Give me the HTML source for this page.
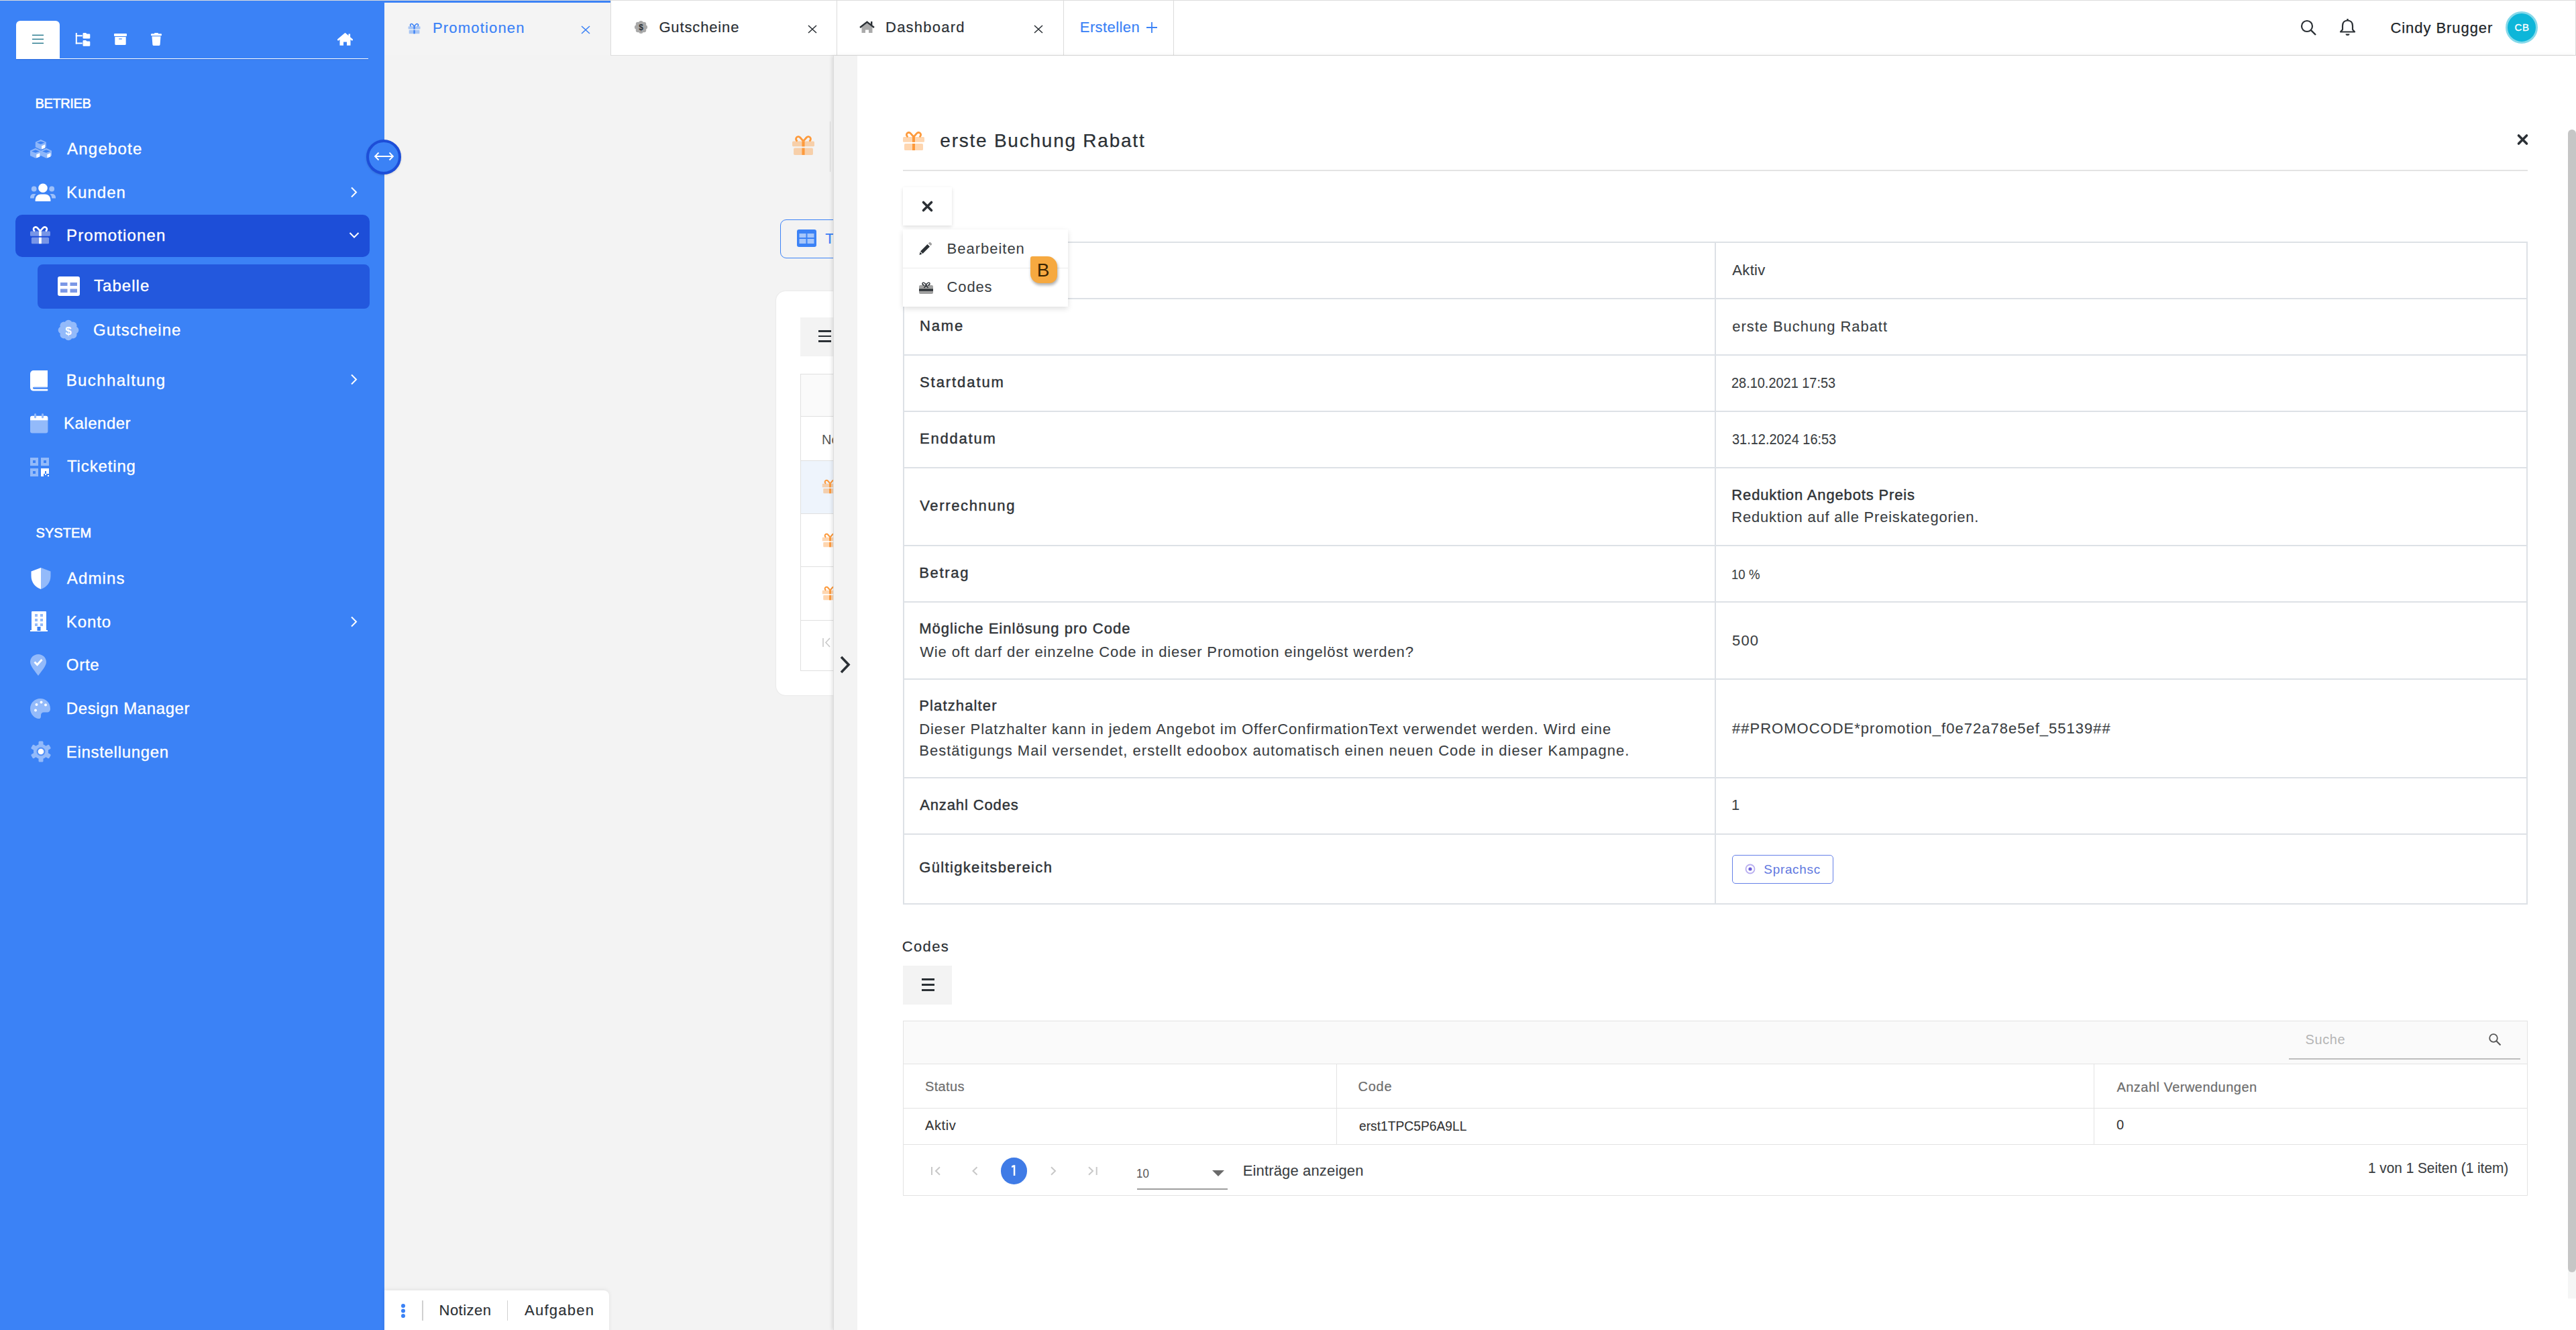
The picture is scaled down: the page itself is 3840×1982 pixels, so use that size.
<!DOCTYPE html><html><head><meta charset="utf-8"><style>
html,body{margin:0;padding:0}
body{width:3840px;height:1982px;position:relative;overflow:hidden;background:#f3f3f3;font-family:"Liberation Sans",sans-serif}
.t{position:absolute;white-space:nowrap;line-height:1}
svg{display:block}
</style></head><body>
<div style="position:absolute;left:573px;top:0px;width:337px;height:82px;background:#f4f4f4;"></div>
<div style="position:absolute;left:573px;top:1px;width:337px;height:3px;background:#3b82f6;"></div>
<div style="position:absolute;left:910px;top:0px;width:2930px;height:82px;background:#fff;border-bottom:1px solid #dedede;border-right:1px solid #dcdcdc;box-sizing:border-box;height:83px;"></div>
<div style="position:absolute;left:0px;top:0px;width:3840px;height:1px;background:#dcdcdc;"></div>
<div style="position:absolute;left:910px;top:0px;width:1px;height:83px;background:#dcdcdc;"></div>
<div style="position:absolute;left:1247px;top:0px;width:1px;height:83px;background:#dcdcdc;"></div>
<div style="position:absolute;left:1585px;top:0px;width:1px;height:83px;background:#dcdcdc;"></div>
<div style="position:absolute;left:1749px;top:0px;width:1px;height:83px;background:#dcdcdc;"></div>
<svg style="position:absolute;left:608.4px;top:34px;" width="19.1" height="16.9" viewBox="0 0 34 30"><g fill="#3b82f6"><g opacity="0.4"><rect x="1" y="9.1" width="32" height="7.7" rx="1.6"/><rect x="3" y="19" width="28" height="10" rx="1.6"/></g><rect x="15" y="9.1" width="4" height="7.7"/><rect x="15" y="19" width="4" height="10"/></g><path d="M17 9L12.5 3.8C11 2 8 2 6.8 4.2C5.8 6 6.5 8 8.5 9M17 9L21.5 3.8C23 2 26 2 27.2 4.2C28.2 6 27.5 8 25.5 9" fill="none" stroke="#3b82f6" stroke-width="2.8"/></svg>
<div class="t" style="left:644.90px;top:31.27px;font-size:22px;color:#3b82f6;letter-spacing:1.190px;-webkit-text-stroke:0.2px #3b82f6;">Promotionen</div>
<svg style="position:absolute;left:866px;top:38px;" width="14" height="13" viewBox="0 0 14 13"><path d="M1 1L13 12M13 1L1 12" stroke="#3b82f6" stroke-width="1.6"/></svg>
<svg style="position:absolute;left:945px;top:30px;" width="21" height="21" viewBox="0 0 21 21"><g fill="#a9a9a9"><circle cx="10.5" cy="10.5" r="7.5"/><circle cx="16.80" cy="10.50" r="3.3"/><circle cx="14.95" cy="14.95" r="3.3"/><circle cx="10.50" cy="16.80" r="3.3"/><circle cx="6.05" cy="14.95" r="3.3"/><circle cx="4.20" cy="10.50" r="3.3"/><circle cx="6.05" cy="6.05" r="3.3"/><circle cx="10.50" cy="4.20" r="3.3"/><circle cx="14.95" cy="6.05" r="3.3"/></g><text x="10.5" y="15" font-family="Liberation Sans" font-weight="700" font-size="12" text-anchor="middle" fill="#2b3035">$</text></svg>
<div class="t" style="left:982.40px;top:29.57px;font-size:22px;color:#2b3035;letter-spacing:0.861px;-webkit-text-stroke:0.2px #2b3035;">Gutscheine</div>
<svg style="position:absolute;left:1204px;top:37px;" width="14" height="13" viewBox="0 0 14 13"><path d="M1 1L13 12M13 1L1 12" stroke="#2b3035" stroke-width="1.6"/></svg>
<svg style="position:absolute;left:1281px;top:31px;" width="24" height="19" viewBox="0 0 24 19"><path d="M3.5 9.5V18H9V13.5H14V18H19.5V9.5L11.5 3Z" fill="#aaaaaa"/><path d="M1 10L11.5 1.8L22 10" fill="none" stroke="#2b3035" stroke-width="2.4"/><rect x="17" y="1" width="2.4" height="5" fill="#2b3035"/></svg>
<div class="t" style="left:1320.00px;top:29.57px;font-size:22px;color:#2b3035;letter-spacing:1.239px;-webkit-text-stroke:0.2px #2b3035;">Dashboard</div>
<svg style="position:absolute;left:1541px;top:37px;" width="14" height="13" viewBox="0 0 14 13"><path d="M1 1L13 12M13 1L1 12" stroke="#2b3035" stroke-width="1.6"/></svg>
<div class="t" style="left:1609.80px;top:29.77px;font-size:22px;color:#3b82f6;letter-spacing:0.405px;-webkit-text-stroke:0.2px #3b82f6;">Erstellen</div>
<svg style="position:absolute;left:1709px;top:33px;" width="16" height="16" viewBox="0 0 16 16"><path d="M8 0V16M0 8H16" stroke="#3b82f6" stroke-width="1.8"/></svg>
<svg style="position:absolute;left:3429px;top:29px;" width="25" height="25" viewBox="0 0 25 25"><circle cx="10" cy="10" r="8" fill="none" stroke="#2b3035" stroke-width="2.2"/><path d="M15.8 15.8L23 23" stroke="#2b3035" stroke-width="2.4"/></svg>
<svg style="position:absolute;left:3487px;top:27px;" width="25" height="27" viewBox="0 0 25 27"><path d="M12.5 3.5c-5 0-7.5 3.5-7.5 8v5.5l-3 3.5h21l-3-3.5v-5.5c0-4.5-2.5-8-7.5-8z" fill="none" stroke="#2b3035" stroke-width="2.2" stroke-linejoin="round"/><rect x="11.3" y="1" width="2.4" height="3" fill="#2b3035"/><path d="M9.5 23.5a3 2.5 0 0 0 6 0z" fill="#2b3035"/></svg>
<div class="t" style="left:3563.40px;top:31.07px;font-size:22px;color:#212529;letter-spacing:0.942px;-webkit-text-stroke:0.25px #212529;">Cindy Brugger</div>
<div style="position:absolute;left:3735px;top:17px;width:42px;height:42px;border-radius:50%;background:#0db6d9;border:3px solid #86d9ea"></div>
<div class="t" style="left:3748.50px;top:32.90px;font-size:15px;color:#fff;letter-spacing:0.667px;-webkit-text-stroke:0.3px #fff;">CB</div>
<svg style="position:absolute;left:1180px;top:201px;" width="35" height="31" viewBox="0 0 34 30"><g fill="#fd9a3c"><g opacity="0.4"><rect x="1" y="9.1" width="32" height="7.7" rx="1.6"/><rect x="3" y="19" width="28" height="10" rx="1.6"/></g><rect x="15" y="9.1" width="4" height="7.7"/><rect x="15" y="19" width="4" height="10"/></g><path d="M17 9L12.5 3.8C11 2 8 2 6.8 4.2C5.8 6 6.5 8 8.5 9M17 9L21.5 3.8C23 2 26 2 27.2 4.2C28.2 6 27.5 8 25.5 9" fill="none" stroke="#fd9a3c" stroke-width="2.8"/></svg>
<div style="position:absolute;left:1237px;top:181px;width:1px;height:75px;background:#d9d9d9;"></div>
<div style="position:absolute;left:1163px;top:327px;width:200px;height:58px;border:1.5px solid #3b82f6;border-radius:9px;box-sizing:border-box"></div>
<svg style="position:absolute;left:1188px;top:342px;" width="29" height="26" viewBox="0 0 29 26"><rect width="29" height="26" rx="3" fill="#3b82f6"/><g fill="#fff" opacity=".55"><rect x="3.5" y="6" width="10" height="6"/><rect x="15.5" y="6" width="10" height="6"/><rect x="3.5" y="14" width="10" height="7"/><rect x="15.5" y="14" width="10" height="7"/></g></svg>
<div class="t" style="left:1230.20px;top:345.37px;font-size:22px;color:#3b82f6;-webkit-text-stroke:0.2px #3b82f6;">Ta</div>
<div style="position:absolute;left:1157px;top:434px;width:500px;height:602px;background:#fff;border-radius:14px;box-shadow:0 0 2px rgba(0,0,0,.12)"></div>
<div style="position:absolute;left:1193px;top:473px;width:100px;height:58px;background:#f3f3f3;"></div>
<div style="position:absolute;left:1220px;top:492px;width:19px;height:2.6px;background:#2b3035;"></div>
<div style="position:absolute;left:1220px;top:499.5px;width:19px;height:2.6px;background:#2b3035;"></div>
<div style="position:absolute;left:1220px;top:507px;width:19px;height:2.6px;background:#2b3035;"></div>
<div style="position:absolute;left:1193px;top:557px;width:300px;height:443px;border:1px solid #e0e0e0;box-sizing:border-box;background:#fff"></div>
<div style="position:absolute;left:1194px;top:558px;width:299px;height:63px;background:#fafafa;border-bottom:1px solid #e0e0e0;box-sizing:border-box;"></div>
<div style="position:absolute;left:1194px;top:686px;width:299px;height:1px;background:#e0e0e0;"></div>
<div style="position:absolute;left:1194px;top:687px;width:299px;height:78px;background:#eef4fc;"></div>
<div style="position:absolute;left:1194px;top:765px;width:299px;height:1px;background:#e0e0e0;"></div>
<div style="position:absolute;left:1194px;top:844px;width:299px;height:1px;background:#e0e0e0;"></div>
<div style="position:absolute;left:1194px;top:924px;width:299px;height:1px;background:#e0e0e0;"></div>
<div class="t" style="left:1225.00px;top:645.07px;font-size:20px;color:#555;">No</div>
<svg style="position:absolute;left:1225px;top:714px;" width="25" height="22" viewBox="0 0 34 30"><g fill="#fd9a3c"><g opacity="0.4"><rect x="1" y="9.1" width="32" height="7.7" rx="1.6"/><rect x="3" y="19" width="28" height="10" rx="1.6"/></g><rect x="15" y="9.1" width="4" height="7.7"/><rect x="15" y="19" width="4" height="10"/></g><path d="M17 9L12.5 3.8C11 2 8 2 6.8 4.2C5.8 6 6.5 8 8.5 9M17 9L21.5 3.8C23 2 26 2 27.2 4.2C28.2 6 27.5 8 25.5 9" fill="none" stroke="#fd9a3c" stroke-width="2.8"/></svg>
<svg style="position:absolute;left:1225px;top:794px;" width="25" height="22" viewBox="0 0 34 30"><g fill="#fd9a3c"><g opacity="0.4"><rect x="1" y="9.1" width="32" height="7.7" rx="1.6"/><rect x="3" y="19" width="28" height="10" rx="1.6"/></g><rect x="15" y="9.1" width="4" height="7.7"/><rect x="15" y="19" width="4" height="10"/></g><path d="M17 9L12.5 3.8C11 2 8 2 6.8 4.2C5.8 6 6.5 8 8.5 9M17 9L21.5 3.8C23 2 26 2 27.2 4.2C28.2 6 27.5 8 25.5 9" fill="none" stroke="#fd9a3c" stroke-width="2.8"/></svg>
<svg style="position:absolute;left:1225px;top:873px;" width="25" height="22" viewBox="0 0 34 30"><g fill="#fd9a3c"><g opacity="0.4"><rect x="1" y="9.1" width="32" height="7.7" rx="1.6"/><rect x="3" y="19" width="28" height="10" rx="1.6"/></g><rect x="15" y="9.1" width="4" height="7.7"/><rect x="15" y="19" width="4" height="10"/></g><path d="M17 9L12.5 3.8C11 2 8 2 6.8 4.2C5.8 6 6.5 8 8.5 9M17 9L21.5 3.8C23 2 26 2 27.2 4.2C28.2 6 27.5 8 25.5 9" fill="none" stroke="#fd9a3c" stroke-width="2.8"/></svg>
<svg style="position:absolute;left:1226px;top:950px;" width="20" height="15" viewBox="0 0 20 15"><path d="M1 1V14" stroke="#c9c9c9" stroke-width="1.6"/><path d="M11 1L5 7.5L11 14" fill="none" stroke="#c9c9c9" stroke-width="1.6"/></svg>
<div style="position:absolute;left:0px;top:1px;width:573px;height:1981px;background:#3b82f6;"></div>
<div style="position:absolute;left:24px;top:31px;width:65px;height:57px;background:#fff;border-radius:6px 6px 0 0"></div>
<div style="position:absolute;left:24px;top:86.8px;width:525px;height:1.3px;background:#fff;box-shadow:0 1px 1px rgba(20,60,160,.35);"></div>
<svg style="position:absolute;left:48px;top:51px;" width="17" height="15" viewBox="0 0 17 15"><path d="M0 1.4H17M0 7.4H17M0 13.3H17" stroke="#0e6a80" stroke-width="1.3"/></svg>
<svg style="position:absolute;left:112px;top:48px;" width="23" height="21" viewBox="0 0 23 21"><g fill="#fff"><rect x="0.8" y="1" width="2" height="16.5"/><rect x="0.8" y="4.3" width="10" height="2"/><rect x="0.8" y="15.5" width="10" height="2"/><path d="M11.5 2.2a1.2 1.2 0 0 1 1.2-1.2h3.3l1.6 1.4h3.5a1.2 1.2 0 0 1 1.2 1.2v4.6a1.2 1.2 0 0 1-1.2 1.2h-8.4a1.2 1.2 0 0 1-1.2-1.2z"/><path d="M11.5 13.2a1.2 1.2 0 0 1 1.2-1.2h3.3l1.6 1.4h3.5a1.2 1.2 0 0 1 1.2 1.2v4.9a1.2 1.2 0 0 1-1.2 1.2h-8.4a1.2 1.2 0 0 1-1.2-1.2z"/></g></svg>
<svg style="position:absolute;left:169px;top:49px;" width="21" height="19" viewBox="0 0 21 19"><rect x="1" y="1" width="19" height="4" rx="1" fill="#fff"/><path d="M2.3 6H18.7V16.5a1.5 1.5 0 0 1-1.5 1.5H3.8a1.5 1.5 0 0 1-1.5-1.5z" fill="#fff"/><rect x="8" y="8.2" width="5" height="1.6" rx=".8" fill="#3b82f6" opacity=".8"/></svg>
<svg style="position:absolute;left:224px;top:48px;" width="18" height="21" viewBox="0 0 18 21"><rect x="1" y="2.3" width="16" height="3" rx="1" fill="#fff"/><rect x="6" y="1" width="6" height="2.5" rx="1" fill="#fff"/><path d="M2.5 6.3H15.5L14.6 18.6a1.5 1.5 0 0 1-1.5 1.4H4.9a1.5 1.5 0 0 1-1.5-1.4z" fill="#fff"/></svg>
<svg style="position:absolute;left:503px;top:49px;" width="23" height="20" viewBox="0 0 23 20"><path d="M3.5 9V18.7H9V13.5H14V18.7H19.5V9L11.5 2.2Z" fill="#fff"/><path d="M1.2 10.2L11.5 1.5L21.8 10.2" fill="none" stroke="#fff" stroke-width="2.6" stroke-linecap="round"/><rect x="16.5" y="1.5" width="2.6" height="5" fill="#fff"/></svg>
<div class="t" style="left:52.50px;top:144.37px;font-size:20px;color:#fff;letter-spacing:-0.373px;-webkit-text-stroke:0.6px #fff;">BETRIEB</div>
<svg style="position:absolute;left:44px;top:207px;" width="34" height="30" viewBox="0 0 34 30"><path d="M16.80,1.00 L24.80,4.80 L24.80,12.20 L16.80,16.00 L8.80,12.20 L8.80,4.80Z M10.90,5.60 L16.80,3.50 L22.70,5.60 L16.80,7.90Z" fill="#fff" fill-opacity=".42" fill-rule="evenodd"/><polygon points="18.10,10.40 23.10,8.30 23.10,13.60 18.10,15.60" fill="#fff"/><path d="M9.00,13.80 L17.00,17.60 L17.00,25.00 L9.00,28.80 L1.00,25.00 L1.00,17.60Z M3.10,18.40 L9.00,16.30 L14.90,18.40 L9.00,20.70Z" fill="#fff" fill-opacity=".42" fill-rule="evenodd"/><polygon points="10.30,23.20 15.30,21.10 15.30,26.40 10.30,28.40" fill="#fff"/><path d="M25.00,13.80 L33.00,17.60 L33.00,25.00 L25.00,28.80 L17.00,25.00 L17.00,17.60Z M19.10,18.40 L25.00,16.30 L30.90,18.40 L25.00,20.70Z" fill="#fff" fill-opacity=".42" fill-rule="evenodd"/><polygon points="26.30,23.20 31.30,21.10 31.30,26.40 26.30,28.40" fill="#fff"/></svg>
<div class="t" style="left:100.00px;top:210.18px;font-size:24px;color:#fff;letter-spacing:1.227px;-webkit-text-stroke:0.35px #fff;">Angebote</div>
<svg style="position:absolute;left:44px;top:272px;" width="40" height="30" viewBox="0 0 40 30"><circle cx="20" cy="8.3" r="6.8" fill="#fff"/><path d="M8.6 28v-2.5a8 8 0 0 1 8-8h6.8a8 8 0 0 1 8 8V28z" fill="#fff"/><g fill="#fff" opacity=".5"><circle cx="6.7" cy="9.5" r="3.9"/><circle cx="33.2" cy="9.5" r="3.9"/><path d="M1 22a5 5 0 0 1 5-5h3.5a9 9 0 0 0-2.8 6.5H1z"/><path d="M39 22a5 5 0 0 0-5-5h-3.5a9 9 0 0 1 2.8 6.5H39z"/></g></svg>
<div class="t" style="left:99.00px;top:275.18px;font-size:24px;color:#fff;letter-spacing:1.020px;-webkit-text-stroke:0.35px #fff;">Kunden</div>
<svg style="position:absolute;left:522px;top:278px;" width="12" height="17" viewBox="0 0 12 17"><path d="M2 1.5L9 8.5L2 15.5" fill="none" stroke="#fff" stroke-width="2"/></svg>
<div style="position:absolute;left:23px;top:320px;width:528px;height:63px;background:#1d4ed8;border-radius:10px"></div>
<svg style="position:absolute;left:44.06px;top:335.8px;" width="31.9" height="28.1" viewBox="0 0 34 30"><g fill="#fff"><g opacity="0.4"><rect x="1" y="9.1" width="32" height="7.7" rx="1.6"/><rect x="3" y="19" width="28" height="10" rx="1.6"/></g><rect x="15" y="9.1" width="4" height="7.7"/><rect x="15" y="19" width="4" height="10"/></g><path d="M17 9L12.5 3.8C11 2 8 2 6.8 4.2C5.8 6 6.5 8 8.5 9M17 9L21.5 3.8C23 2 26 2 27.2 4.2C28.2 6 27.5 8 25.5 9" fill="none" stroke="#fff" stroke-width="2.8"/></svg>
<div class="t" style="left:99.00px;top:338.68px;font-size:24px;color:#fff;letter-spacing:1.127px;-webkit-text-stroke:0.35px #fff;">Promotionen</div>
<svg style="position:absolute;left:519px;top:345px;" width="18" height="12" viewBox="0 0 18 12"><path d="M2.5 2L9 8.5L15.5 2" fill="none" stroke="#fff" stroke-width="2"/></svg>
<div style="position:absolute;left:56px;top:394px;width:495px;height:66px;background:#2358dd;border-radius:8px"></div>
<svg style="position:absolute;left:85.5px;top:411.5px;" width="33" height="29" viewBox="0 0 33 29"><rect width="33" height="29" rx="3" fill="#fff"/><g fill="#7b98e6"><rect x="4" y="9" width="10.5" height="5"/><rect x="18.5" y="9" width="10.5" height="5"/><rect x="4" y="18.5" width="10.5" height="5.5"/><rect x="18.5" y="18.5" width="10.5" height="5.5"/></g></svg>
<div class="t" style="left:140.00px;top:414.08px;font-size:24px;color:#fff;letter-spacing:1.049px;-webkit-text-stroke:0.35px #fff;">Tabelle</div>
<svg style="position:absolute;left:86px;top:476px;" width="32" height="32" viewBox="0 0 32 32"><g fill="#fff" opacity=".45"><circle cx="16" cy="16" r="11"/><circle cx="25.50" cy="16.00" r="5.8"/><circle cx="22.72" cy="22.72" r="5.8"/><circle cx="16.00" cy="25.50" r="5.8"/><circle cx="9.28" cy="22.72" r="5.8"/><circle cx="6.50" cy="16.00" r="5.8"/><circle cx="9.28" cy="9.28" r="5.8"/><circle cx="16.00" cy="6.50" r="5.8"/><circle cx="22.72" cy="9.28" r="5.8"/></g><text x="16" y="22.5" font-family="Liberation Sans" font-weight="700" font-size="17" text-anchor="middle" fill="#fff">$</text></svg>
<div class="t" style="left:139.00px;top:479.68px;font-size:24px;color:#fff;letter-spacing:0.993px;-webkit-text-stroke:0.35px #fff;">Gutscheine</div>
<svg style="position:absolute;left:44px;top:551px;" width="28" height="32" viewBox="0 0 28 32"><path d="M1 6a5 5 0 0 1 5-5H27V25.5H6.5a1.6 1.6 0 0 0 0 3.2H26.5a1.6 1.6 0 0 1 0 2.9H6a5 5 0 0 1-5-5z" fill="#fff"/><rect x="5" y="23.5" width="22" height="3.3" rx="1.6" fill="#fff" opacity=".45"/></svg>
<div class="t" style="left:98.70px;top:555.18px;font-size:24px;color:#fff;letter-spacing:1.391px;-webkit-text-stroke:0.35px #fff;">Buchhaltung</div>
<svg style="position:absolute;left:522px;top:556.5px;" width="12" height="17" viewBox="0 0 12 17"><path d="M2 1.5L9 8.5L2 15.5" fill="none" stroke="#fff" stroke-width="2"/></svg>
<svg style="position:absolute;left:44px;top:615px;" width="28" height="32" viewBox="0 0 28 32"><path d="M1 11.5H27.4V27.5a3 3 0 0 1-3 3H4a3 3 0 0 1-3-3z" fill="#fff" opacity=".45"/><path d="M4 4.7H24.4a3 3 0 0 1 3 3V11.5H1V7.7a3 3 0 0 1 3-3z" fill="#fff"/><g fill="#93bafa"><rect x="7" y="1.2" width="3" height="7" rx="1.2"/><rect x="18" y="1.2" width="3" height="7" rx="1.2"/></g></svg>
<div class="t" style="left:95.00px;top:619.08px;font-size:24px;color:#fff;letter-spacing:0.503px;-webkit-text-stroke:0.35px #fff;">Kalender</div>
<svg style="position:absolute;left:44px;top:681px;" width="30" height="30" viewBox="0 0 30 30"><g fill="#fff" opacity=".45"><path fill-rule="evenodd" d="M1 1h12v12H1zM5 5v4h4V5z"/><path fill-rule="evenodd" d="M17 1h12v12H17zM21 5v4h4V5z"/><path fill-rule="evenodd" d="M1 17h12v12H1zM5 21v4h4v-4z"/></g><g fill="#fff"><rect x="17" y="17" width="4" height="12"/><rect x="21" y="17" width="4" height="4"/><rect x="25" y="17" width="4" height="8"/><rect x="21" y="21" width="2" height="4"/><rect x="23" y="25" width="2" height="2"/><rect x="27" y="27" width="2" height="2"/></g></svg>
<div class="t" style="left:100.00px;top:682.68px;font-size:24px;color:#fff;letter-spacing:0.850px;-webkit-text-stroke:0.35px #fff;">Ticketing</div>
<div class="t" style="left:53.50px;top:784.07px;font-size:20px;color:#fff;letter-spacing:0.085px;-webkit-text-stroke:0.6px #fff;">SYSTEM</div>
<svg style="position:absolute;left:45px;top:845px;" width="32" height="34" viewBox="0 0 32 34"><path d="M16 1V33C8 30 1.5 24 1.5 13V6.5Z" fill="#fff"/><path d="M16 1L30.5 6.5V13C30.5 24 24 30 16 33Z" fill="#fff" opacity=".45"/></svg>
<div class="t" style="left:99.80px;top:850.28px;font-size:24px;color:#fff;letter-spacing:1.135px;-webkit-text-stroke:0.35px #fff;">Admins</div>
<svg style="position:absolute;left:44px;top:910px;" width="28" height="32" viewBox="0 0 28 32"><rect x="3" y="1" width="22" height="29" rx="1" fill="#fff"/><rect x="1" y="29" width="26" height="2" fill="#fff"/><g fill="#3b82f6" opacity=".55"><rect x="8" y="5" width="4" height="4"/><rect x="16" y="5" width="4" height="4"/><rect x="8" y="12" width="4" height="4"/><rect x="16" y="12" width="4" height="4"/><rect x="8" y="19" width="4" height="4"/><rect x="16" y="19" width="4" height="4"/></g><rect x="11.5" y="24" width="5" height="6" fill="#3b82f6"/></svg>
<div class="t" style="left:98.80px;top:914.68px;font-size:24px;color:#fff;letter-spacing:0.907px;-webkit-text-stroke:0.35px #fff;">Konto</div>
<svg style="position:absolute;left:522px;top:918px;" width="12" height="17" viewBox="0 0 12 17"><path d="M2 1.5L9 8.5L2 15.5" fill="none" stroke="#fff" stroke-width="2"/></svg>
<svg style="position:absolute;left:44px;top:974px;" width="26" height="34" viewBox="0 0 26 34"><path d="M13 1C6.5 1 1 6 1 12.5C1 19 9 27 13 33C17 27 25 19 25 12.5C25 6 19.5 1 13 1Z" fill="#fff" opacity=".45"/><path d="M7.5 12.5L11.5 16.5L18.5 9" fill="none" stroke="#fff" stroke-width="3"/></svg>
<div class="t" style="left:98.80px;top:979.18px;font-size:24px;color:#fff;letter-spacing:0.724px;-webkit-text-stroke:0.35px #fff;">Orte</div>
<svg style="position:absolute;left:44px;top:1040px;" width="32" height="32" viewBox="0 0 32 32"><path d="M16 1C7.7 1 1 7.7 1 16c0 8.3 6.7 15 13 15c3 0 3-2.5 3-5c0-3 1.5-4.5 4.5-4.5H26c3 0 5-2 5-5C31 7 24.3 1 16 1z" fill="#fff" opacity=".45"/><g fill="#fff"><circle cx="9" cy="18.5" r="2"/><circle cx="10.5" cy="10" r="2"/><circle cx="17.5" cy="6.5" r="2"/><circle cx="24" cy="10.5" r="2"/></g></svg>
<div class="t" style="left:98.80px;top:1044.18px;font-size:24px;color:#fff;letter-spacing:0.584px;-webkit-text-stroke:0.35px #fff;">Design Manager</div>
<svg style="position:absolute;left:45px;top:1104px;" width="32" height="32" viewBox="0 0 32 32"><g fill="#fff" opacity=".45"><circle cx="16" cy="16" r="11"/><rect x="12.5" y="0.5" width="7" height="8" rx="1.5" transform="rotate(0 16 16)"/><rect x="12.5" y="0.5" width="7" height="8" rx="1.5" transform="rotate(60 16 16)"/><rect x="12.5" y="0.5" width="7" height="8" rx="1.5" transform="rotate(120 16 16)"/><rect x="12.5" y="0.5" width="7" height="8" rx="1.5" transform="rotate(180 16 16)"/><rect x="12.5" y="0.5" width="7" height="8" rx="1.5" transform="rotate(240 16 16)"/><rect x="12.5" y="0.5" width="7" height="8" rx="1.5" transform="rotate(300 16 16)"/></g><circle cx="16" cy="16" r="6.5" fill="#3b82f6" opacity=".7"/><circle cx="16" cy="16" r="4.3" fill="#fff"/></svg>
<div class="t" style="left:98.80px;top:1108.68px;font-size:24px;color:#fff;letter-spacing:0.687px;-webkit-text-stroke:0.35px #fff;">Einstellungen</div>
<div style="position:absolute;left:546px;top:207.5px;width:52px;height:52px;border-radius:50%;background:#3b82f6;border:4px solid #1d4ed8;box-sizing:border-box;box-shadow:0 1px 3px rgba(0,0,0,.15)"></div>
<svg style="position:absolute;left:557px;top:226px;" width="31" height="14" viewBox="0 0 31 14"><path d="M2 7H29M7.5 1.5L2 7L7.5 12.5M23.5 1.5L29 7L23.5 12.5" fill="none" stroke="#fff" stroke-width="1.8"/></svg>
<div style="position:absolute;left:573px;top:1923px;width:335px;height:70px;background:#fff;border-radius:0 8px 0 0;box-shadow:0 -1px 6px rgba(0,0,0,.08)"></div>
<svg style="position:absolute;left:596px;top:1942px;" width="10" height="23" viewBox="0 0 10 23"><g fill="#3b82f6"><circle cx="5" cy="4" r="3"/><circle cx="5" cy="11.5" r="3"/><circle cx="5" cy="19" r="3"/></g></svg>
<div style="position:absolute;left:629px;top:1938px;width:1.5px;height:30px;background:#d0d0d0;"></div>
<div class="t" style="left:654.50px;top:1942.37px;font-size:22px;color:#2b3035;letter-spacing:0.490px;-webkit-text-stroke:0.15px #2b3035;">Notizen</div>
<div style="position:absolute;left:755.5px;top:1938px;width:1.5px;height:30px;background:#d0d0d0;"></div>
<div class="t" style="left:782.00px;top:1942.37px;font-size:22px;color:#2b3035;letter-spacing:1.262px;-webkit-text-stroke:0.15px #2b3035;">Aufgaben</div>
<div style="position:absolute;left:1242px;top:83px;width:2598px;height:1899px;background:#fff;box-shadow:-2px 0 5px rgba(0,0,0,.10);border-left:1px solid #dcdcdc;box-sizing:border-box"></div>
<div style="position:absolute;left:1243px;top:83px;width:35px;height:1899px;background:#f3f3f3;"></div>
<svg style="position:absolute;left:1250px;top:976px;" width="20" height="29" viewBox="0 0 20 29"><path d="M4 3L15 14.5L4 26" fill="none" stroke="#2b3035" stroke-width="3.6"/></svg>
<div style="position:absolute;left:3828px;top:1880px;width:12px;height:55px;background:#f5f5f5;"></div>
<div style="position:absolute;left:3828px;top:193px;width:12px;height:1703px;background:#c6c6c6;border-radius:6px"></div>
<svg style="position:absolute;left:1345px;top:195px;" width="34" height="30" viewBox="0 0 34 30"><g fill="#fd9a3c"><g opacity="0.4"><rect x="1" y="9.1" width="32" height="7.7" rx="1.6"/><rect x="3" y="19" width="28" height="10" rx="1.6"/></g><rect x="15" y="9.1" width="4" height="7.7"/><rect x="15" y="19" width="4" height="10"/></g><path d="M17 9L12.5 3.8C11 2 8 2 6.8 4.2C5.8 6 6.5 8 8.5 9M17 9L21.5 3.8C23 2 26 2 27.2 4.2C28.2 6 27.5 8 25.5 9" fill="none" stroke="#fd9a3c" stroke-width="2.8"/></svg>
<div class="t" style="left:1401.30px;top:196.29px;font-size:28px;color:#2b3035;letter-spacing:1.765px;-webkit-text-stroke:0.25px #2b3035;">erste Buchung Rabatt</div>
<svg style="position:absolute;left:3751px;top:198px;" width="19" height="20" viewBox="0 0 19 20"><path d="M3.5 4L15.5 16M15.5 4L3.5 16" stroke="#2b3035" stroke-width="3.6" stroke-linecap="round"/></svg>
<div style="position:absolute;left:1346px;top:253px;width:2422px;height:1.6px;background:#e3e3e3;"></div>
<div style="position:absolute;left:1346px;top:360px;width:2422px;height:988px;border:2px solid #dde1e6;box-sizing:border-box"></div>
<div style="position:absolute;left:1346px;top:444px;width:2422px;height:2px;background:#dde1e6;"></div>
<div style="position:absolute;left:1346px;top:528px;width:2422px;height:2px;background:#dde1e6;"></div>
<div style="position:absolute;left:1346px;top:612px;width:2422px;height:2px;background:#dde1e6;"></div>
<div style="position:absolute;left:1346px;top:696px;width:2422px;height:2px;background:#dde1e6;"></div>
<div style="position:absolute;left:1346px;top:812px;width:2422px;height:2px;background:#dde1e6;"></div>
<div style="position:absolute;left:1346px;top:896px;width:2422px;height:2px;background:#dde1e6;"></div>
<div style="position:absolute;left:1346px;top:1011px;width:2422px;height:2px;background:#dde1e6;"></div>
<div style="position:absolute;left:1346px;top:1158px;width:2422px;height:2px;background:#dde1e6;"></div>
<div style="position:absolute;left:1346px;top:1242px;width:2422px;height:2px;background:#dde1e6;"></div>
<div style="position:absolute;left:2555.5px;top:360px;width:2px;height:986px;background:#dde1e6;"></div>
<div class="t" style="left:1371.00px;top:474.87px;font-size:22px;color:#2f3337;letter-spacing:1.850px;-webkit-text-stroke:0.45px #2f3337;">Name</div>
<div class="t" style="left:1371.00px;top:558.97px;font-size:22px;color:#2f3337;letter-spacing:1.925px;-webkit-text-stroke:0.45px #2f3337;">Startdatum</div>
<div class="t" style="left:1371.00px;top:642.87px;font-size:22px;color:#2f3337;letter-spacing:1.777px;-webkit-text-stroke:0.45px #2f3337;">Enddatum</div>
<div class="t" style="left:1371.20px;top:743.37px;font-size:22px;color:#2f3337;letter-spacing:1.648px;-webkit-text-stroke:0.45px #2f3337;">Verrechnung</div>
<div class="t" style="left:1370.20px;top:842.67px;font-size:22px;color:#2f3337;letter-spacing:1.683px;-webkit-text-stroke:0.45px #2f3337;">Betrag</div>
<div class="t" style="left:1370.20px;top:925.77px;font-size:22px;color:#2f3337;letter-spacing:1.032px;-webkit-text-stroke:0.45px #2f3337;">Mögliche Einlösung pro Code</div>
<div class="t" style="left:1371.20px;top:961.07px;font-size:22px;color:#3a3e42;letter-spacing:0.869px;-webkit-text-stroke:0.1px #3a3e42;">Wie oft darf der einzelne Code in dieser Promotion eingelöst werden?</div>
<div class="t" style="left:1370.20px;top:1041.37px;font-size:22px;color:#2f3337;letter-spacing:1.138px;-webkit-text-stroke:0.45px #2f3337;">Platzhalter</div>
<div class="t" style="left:1370.20px;top:1075.87px;font-size:22px;color:#3a3e42;letter-spacing:0.950px;-webkit-text-stroke:0.1px #3a3e42;">Dieser Platzhalter kann in jedem Angebot im OfferConfirmationText verwendet werden. Wird eine</div>
<div class="t" style="left:1370.20px;top:1107.67px;font-size:22px;color:#3a3e42;letter-spacing:1.028px;-webkit-text-stroke:0.1px #3a3e42;">Bestätigungs Mail versendet, erstellt edoobox automatisch einen neuen Code in dieser Kampagne.</div>
<div class="t" style="left:1371.20px;top:1188.77px;font-size:22px;color:#2f3337;letter-spacing:0.875px;-webkit-text-stroke:0.45px #2f3337;">Anzahl Codes</div>
<div class="t" style="left:1370.20px;top:1282.37px;font-size:22px;color:#2f3337;letter-spacing:1.346px;-webkit-text-stroke:0.45px #2f3337;">Gültigkeitsbereich</div>
<div class="t" style="left:2582.30px;top:391.57px;font-size:22px;color:#3a3e42;letter-spacing:0.332px;-webkit-text-stroke:0.1px #3a3e42;">Aktiv</div>
<div class="t" style="left:2582.30px;top:475.97px;font-size:22px;color:#3a3e42;letter-spacing:0.943px;-webkit-text-stroke:0.1px #3a3e42;">erste Buchung Rabatt</div>
<div class="t" style="left:2581.39px;top:559.97px;font-size:22px;color:#3a3e42;transform:scaleX(0.9057);transform-origin:0 0;-webkit-text-stroke:0.1px #3a3e42;">28.10.2021 17:53</div>
<div class="t" style="left:2582.30px;top:643.67px;font-size:22px;color:#3a3e42;transform:scaleX(0.9062);transform-origin:0 0;-webkit-text-stroke:0.1px #3a3e42;">31.12.2024 16:53</div>
<div class="t" style="left:2581.30px;top:726.67px;font-size:22px;color:#2f3337;letter-spacing:0.853px;-webkit-text-stroke:0.45px #2f3337;">Reduktion Angebots Preis</div>
<div class="t" style="left:2581.30px;top:760.37px;font-size:22px;color:#3a3e42;letter-spacing:0.791px;-webkit-text-stroke:0.1px #3a3e42;">Reduktion auf alle Preiskategorien.</div>
<div class="t" style="left:2581.11px;top:844.52px;font-size:21px;color:#3a3e42;transform:scaleX(0.8876);transform-origin:0 0;-webkit-text-stroke:0.1px #3a3e42;">10 %</div>
<div class="t" style="left:2582.00px;top:943.57px;font-size:22px;color:#3a3e42;letter-spacing:1.165px;-webkit-text-stroke:0.1px #3a3e42;">500</div>
<div class="t" style="left:2582.00px;top:1074.97px;font-size:22px;color:#3a3e42;letter-spacing:1.012px;-webkit-text-stroke:0.1px #3a3e42;">##PROMOCODE*promotion_f0e72a78e5ef_55139##</div>
<div class="t" style="left:2581.00px;top:1189.07px;font-size:22px;color:#3a3e42;">1</div>
<div style="position:absolute;left:2582px;top:1274px;width:151px;height:42.5px;border:1.5px solid #6580e8;border-radius:5px;box-sizing:border-box"></div>
<svg style="position:absolute;left:2600px;top:1286px;" width="18" height="18" viewBox="0 0 18 18"><circle cx="9" cy="9" r="6.5" fill="none" stroke="#b8aef0" stroke-width="1.8"/><circle cx="9" cy="9" r="2.6" fill="#6c5fd8"/></svg>
<div class="t" style="left:2629.30px;top:1285.91px;font-size:19px;color:#5f78e0;letter-spacing:0.671px;">Sprachsc</div>
<div style="position:absolute;left:1346px;top:279px;width:73px;height:57px;background:#fff;box-shadow:0 2px 5px rgba(0,0,0,.13)"></div>
<svg style="position:absolute;left:1373px;top:298px;" width="19" height="19" viewBox="0 0 19 19"><path d="M3.5 3.5L15.5 15.5M15.5 3.5L3.5 15.5" stroke="#2b3035" stroke-width="3.6" stroke-linecap="round"/></svg>
<div style="position:absolute;left:1346px;top:342px;width:246px;height:115px;background:#fff;box-shadow:0 3px 8px rgba(0,0,0,.13)"></div>
<div style="position:absolute;left:1346px;top:399px;width:246px;height:1px;background:#ececec;"></div>
<svg style="position:absolute;left:1369px;top:360px;" width="20" height="21" viewBox="0 0 20 21"><path d="M3 14.5L13.5 4L17 7.5L6.5 18Z" fill="#2b3035"/><path d="M14.8 2.7L16.2 1.3a1.4 1.4 0 0 1 2 0L19.7 2.8a1.4 1.4 0 0 1 0 2L18.3 6.2Z" fill="#a0a0a0"/><path d="M2.5 15.5L5.5 18.5L1.5 20Z" fill="#2b3035"/></svg>
<div class="t" style="left:1411.60px;top:359.87px;font-size:22px;color:#3a3e42;letter-spacing:0.980px;-webkit-text-stroke:0.05px #3a3e42;">Bearbeiten</div>
<svg style="position:absolute;left:1369px;top:418px;" width="23" height="21" viewBox="0 0 23 21"><rect x="1" y="7" width="21" height="13" rx="2" fill="#a0a0a0"/><rect x="1" y="12.5" width="21" height="3.2" fill="#2b3035"/><path d="M11.5 7c-1-4-5.5-5-5.5-2.5c0 1.5 1.5 2.5 3 2.5M11.5 7c1-4 5.5-5 5.5-2.5c0 1.5-1.5 2.5-3 2.5M11.5 7l-3 4M11.5 7l3 4" fill="none" stroke="#2b3035" stroke-width="1.4"/></svg>
<div class="t" style="left:1411.60px;top:417.37px;font-size:22px;color:#3a3e42;letter-spacing:0.852px;-webkit-text-stroke:0.05px #3a3e42;">Codes</div>
<div style="position:absolute;left:1536px;top:382px;width:40px;height:40px;background:#f6a940;border-radius:3px 15px 12px 14px;box-shadow:1px 3px 4px rgba(0,0,0,.32)"></div>
<div class="t" style="left:1545.80px;top:388.89px;font-size:28px;color:#3a2400;">B</div>
<div class="t" style="left:1344.80px;top:1399.87px;font-size:22px;color:#2b3035;letter-spacing:1.352px;-webkit-text-stroke:0.2px #2b3035;">Codes</div>
<div style="position:absolute;left:1346px;top:1439px;width:73px;height:58px;background:#f3f3f3;"></div>
<div style="position:absolute;left:1373.5px;top:1458px;width:19px;height:2.8px;background:#2b3035;"></div>
<div style="position:absolute;left:1373.5px;top:1466px;width:19px;height:2.8px;background:#2b3035;"></div>
<div style="position:absolute;left:1373.5px;top:1474px;width:19px;height:2.8px;background:#2b3035;"></div>
<div style="position:absolute;left:1346px;top:1521px;width:2422px;height:261px;border:1px solid #e3e3e3;box-sizing:border-box"></div>
<div style="position:absolute;left:1347px;top:1522px;width:2420px;height:63.5px;background:#fafafa;"></div>
<div style="position:absolute;left:1346px;top:1585px;width:2422px;height:1px;background:#e3e3e3;"></div>
<div style="position:absolute;left:1346px;top:1650.5px;width:2422px;height:1px;background:#e3e3e3;"></div>
<div style="position:absolute;left:1346px;top:1705px;width:2422px;height:1px;background:#e3e3e3;"></div>
<div style="position:absolute;left:1992px;top:1586px;width:1px;height:119px;background:#e3e3e3;"></div>
<div style="position:absolute;left:3121px;top:1586px;width:1px;height:119px;background:#e3e3e3;"></div>
<div style="position:absolute;left:3412px;top:1577px;width:345px;height:2.2px;background:#bdbdbd;"></div>
<div class="t" style="left:3436.60px;top:1539.07px;font-size:20px;color:#b5b5b5;letter-spacing:0.554px;">Suche</div>
<svg style="position:absolute;left:3709px;top:1539px;" width="21" height="21" viewBox="0 0 21 21"><circle cx="8" cy="8" r="5.8" fill="none" stroke="#555" stroke-width="1.8"/><path d="M12.2 12.2L18.5 18.5" stroke="#555" stroke-width="2"/></svg>
<div class="t" style="left:1379.00px;top:1609.47px;font-size:20px;color:#6d6d6d;letter-spacing:0.340px;-webkit-text-stroke:0.2px #6d6d6d;">Status</div>
<div class="t" style="left:2024.50px;top:1609.47px;font-size:20px;color:#6d6d6d;letter-spacing:0.770px;-webkit-text-stroke:0.2px #6d6d6d;">Code</div>
<div class="t" style="left:3155.40px;top:1609.57px;font-size:20px;color:#6d6d6d;letter-spacing:0.476px;-webkit-text-stroke:0.2px #6d6d6d;">Anzahl Verwendungen</div>
<div class="t" style="left:1379.00px;top:1667.27px;font-size:20px;color:#333;letter-spacing:0.615px;-webkit-text-stroke:0.1px #333;">Aktiv</div>
<div class="t" style="left:2025.50px;top:1667.87px;font-size:20px;color:#333;transform:scaleX(0.9614);transform-origin:0 0;-webkit-text-stroke:0.1px #333;">erst1TPC5P6A9LL</div>
<div class="t" style="left:3155.00px;top:1666.07px;font-size:20px;color:#333;">0</div>
<svg style="position:absolute;left:1380px;top:1735px;" width="25" height="20" viewBox="0 0 25 20"><g fill="none" stroke="#c8c8c8" stroke-width="2"><path d="M9 4V16"/><path d="M21 4.3L15 10L21 15.7"/></g></svg>
<svg style="position:absolute;left:1440px;top:1735px;" width="20" height="20" viewBox="0 0 20 20"><path d="M16.5 4.3L10.5 10L16.5 15.7" fill="none" stroke="#c8c8c8" stroke-width="2"/></svg>
<div style="position:absolute;left:1491.5px;top:1725px;width:39.5px;height:39.5px;border-radius:50%;background:#3f7be6"></div>
<svg style="position:absolute;left:1500px;top:1730px;" width="20" height="30" viewBox="0 0 20 30"><path d="M10.8 6.2H13.3V22H10.8V9.2L8 10V7.6Z" fill="#fff"/></svg>
<svg style="position:absolute;left:1560px;top:1735px;" width="20" height="20" viewBox="0 0 20 20"><path d="M7 4.3L13 10L7 15.7" fill="none" stroke="#c8c8c8" stroke-width="2"/></svg>
<svg style="position:absolute;left:1615px;top:1735px;" width="25" height="20" viewBox="0 0 25 20"><g fill="none" stroke="#c8c8c8" stroke-width="2"><path d="M8 4.3L14 10L8 15.7"/><path d="M19.7 4V16"/></g></svg>
<div class="t" style="left:1693.91px;top:1738.91px;font-size:19px;color:#555;transform:scaleX(0.8893);transform-origin:0 0;">10</div>
<div style="position:absolute;left:1695px;top:1770.5px;width:135px;height:2.2px;background:#9e9e9e;"></div>
<svg style="position:absolute;left:1806px;top:1743px;" width="20" height="11" viewBox="0 0 20 11"><path d="M1 1H19L10 10Z" fill="#6a6a6a"/></svg>
<div class="t" style="left:1852.70px;top:1734.07px;font-size:22px;color:#3a3e42;letter-spacing:0.149px;-webkit-text-stroke:0.1px #3a3e42;">Einträge anzeigen</div>
<div class="t" style="left:3530.05px;top:1730.37px;font-size:22px;color:#3a3e42;transform:scaleX(0.9452);transform-origin:0 0;-webkit-text-stroke:0.1px #3a3e42;">1 von 1 Seiten (1 item)</div>
</body></html>
